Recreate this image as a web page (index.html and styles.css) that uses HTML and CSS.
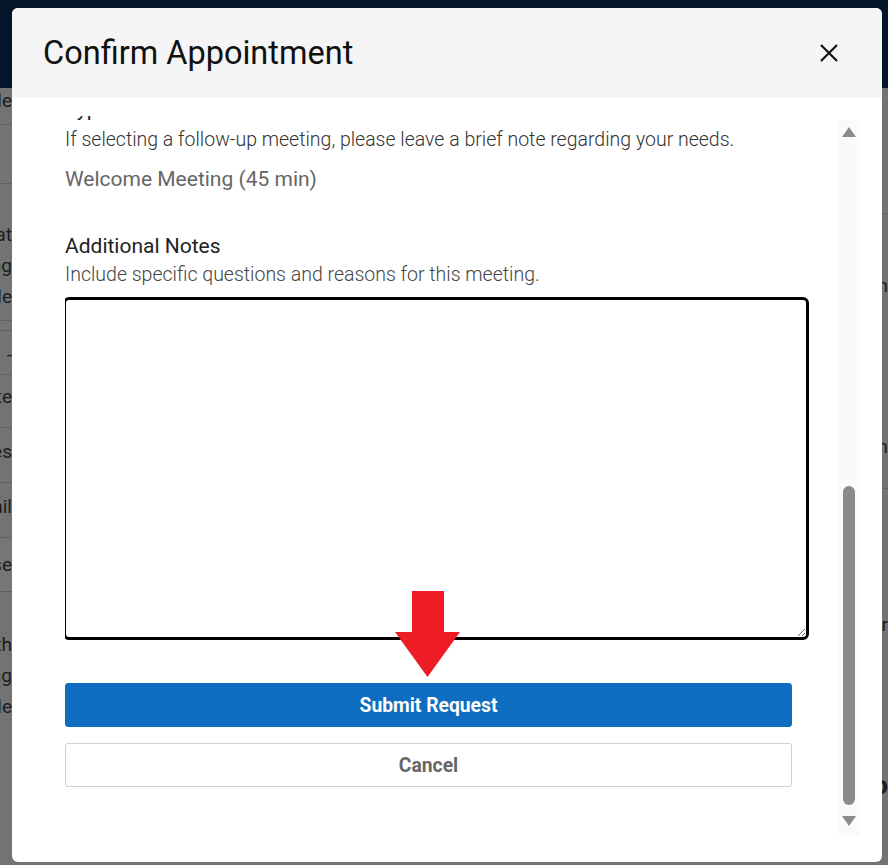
FILE: index.html
```html
<!DOCTYPE html>
<html lang="en">

<head>
    <meta charset="UTF-8">
    <meta name="viewport" content="width=device-width, initial-scale=1.0">
    <title>Confirm Appointment</title>
    <link rel="stylesheet" href="styles.css">
</head>

<body>

    <!-- page behind the dialog (dimmed) -->
    <div class="page">
        <div class="topbar"></div>
        <div class="page-main">
            <div class="side side-left">
                <div class="cell cell-1"><span>Schedule</span></div>
                <div class="cell cell-2"></div>
                <div class="cell cell-3">
                    <span>Format</span>
                    <span>Meeting</span>
                    <span>Schedule</span>
                </div>
                <div class="cell cell-4"></div>
                <div class="cell cell-5"><span>-</span></div>
                <div class="cell cell-6"><span>Date</span></div>
                <div class="cell cell-7"><span>Studies</span></div>
                <div class="cell cell-8"><span>Avail</span></div>
                <div class="cell cell-9"><span>Close</span></div>
                <div class="cell cell-10">
                    <span>With</span>
                    <span>Meeting</span>
                    <span>Schedule</span>
                </div>
            </div>
            <div class="page-center"></div>
            <div class="side side-right">
                <div class="cell r-1"></div>
                <div class="cell r-2"><span>In</span><span>Term</span></div>
                <div class="cell r-3"><span>Year</span><span class="bold">To</span></div>
            </div>
        </div>
    </div>

    <div class="modal" role="dialog">
        <div class="modal-header">
            <h2 class="modal-title">Confirm Appointment</h2>
            <button class="close-btn" aria-label="Close">
                <svg viewBox="0 0 18 18" width="18" height="18">
                    <path d="M1 1L17 17M17 1L1 17" stroke="#111" stroke-width="2.2" fill="none" />
                </svg>
            </button>
        </div>

        <div class="modal-body">
            <div class="scroll-content">
                <div class="field">
                    <label class="field-label type-label">Type</label>
                    <p class="field-help">If selecting a follow-up meeting, please leave a brief note regarding your needs.</p>
                    <p class="field-value">Welcome Meeting (45 min)</p>
                </div>

                <div class="field notes">
                    <label class="field-label" for="notes">Additional Notes</label>
                    <p class="field-help">Include specific questions and reasons for this meeting.</p>
                    <textarea id="notes" class="notes-input"></textarea>
                </div>

                <div class="actions">
                    <button class="btn btn-primary">Submit Request</button>
                    <button class="btn btn-secondary">Cancel</button>
                </div>
            </div>

            <div class="scrollbar">
                <span class="scroll-arrow up"></span>
                <div class="scroll-track">
                    <div class="scroll-thumb"></div>
                </div>
                <span class="scroll-arrow down"></span>
            </div>
        </div>

        <!-- annotation arrow -->
        <svg class="pointer-arrow" viewBox="0 0 65 87" width="65" height="87">
            <path d="M17 0H49V41H65L32.5 86L0 41H17Z" fill="#ee1c25" />
        </svg>
    </div>

</body>

</html>
```

FILE: styles.css
```css
* {
    box-sizing: border-box;
}

body {
    margin: 0;
    font-family: Roboto, "Noto Sans", sans-serif;
    background-color: #737373;
    overflow: hidden;
}

/* dimmed page in the back */
.page {
    height: 865px;
    display: flex;
    flex-direction: column;
}

.topbar {
    height: 88px;
    background-color: #021529;
}

.page-main {
    flex: 1;
    display: flex;
}

.side {
    display: flex;
    flex-direction: column;
    overflow: hidden;
    color: #1c1c1c;
    font-size: 19px;
}

.side-left {
    width: 12px;
}

.side-right {
    width: 6px;
    margin-left: auto;
}

.page-center {
    flex: 1;
}

.cell {
    display: flex;
    flex-direction: column;
    align-items: flex-end;
    white-space: nowrap;
    border-bottom: 1px solid #606060;
    line-height: 31px;
}

.cell-1 { height: 37px; padding-top: 0; line-height: 26px; }
.cell-2 { height: 59px; }
.cell-3 { height: 137px; padding-top: 35px; }
.cell-4 { height: 10px; }
.cell-5 { height: 44px; padding-top: 8px; }
.cell-6 { height: 53px; padding-top: 6px; }
.cell-7 { height: 55px; padding-top: 8px; }
.cell-8 { height: 55px; padding-top: 8px; }
.cell-9 { height: 54px; padding-top: 11px; background-color: #767676; }
.cell-10 { flex: 1; border-bottom: none; padding-top: 37px; }

.r-1 { height: 126px; }
.r-2 { height: 275px; padding-top: 56px; gap: 130px; }
.r-3 { flex: 1; border-bottom: none; padding-top: 120px; gap: 130px; }

.bold {
    font-weight: 700;
    font-size: 26px;
}

/* dialog */
.modal {
    position: fixed;
    left: 12px;
    top: 8px;
    width: 870px;
    height: 854px;
    background-color: #fff;
    border-radius: 6px;
    display: flex;
    flex-direction: column;
    overflow: hidden;
}

.modal-header {
    height: 90px;
    flex-shrink: 0;
    background-color: #f5f5f5;
    display: flex;
    align-items: center;
    justify-content: space-between;
    padding: 0 44px 0 31px;
}

.modal-title {
    margin: 0;
    font-size: 32.5px;
    font-weight: 400;
    color: #111;
}

.close-btn {
    border: none;
    background: none;
    padding: 0;
    width: 18px;
    height: 18px;
    display: flex;
    cursor: pointer;
}

.modal-body {
    flex: 1;
    display: flex;
    gap: 28px;
    padding: 18px 22px 27px 53px;
    min-height: 0;
}

.scroll-content {
    flex: 1;
    overflow: hidden;
    display: flex;
    flex-direction: column;
}

.field {
    display: flex;
    flex-direction: column;
}

.field-label {
    font-size: 21px;
    line-height: 24px;
    color: #222;
}

/* label scrolled up under the header */
.type-label {
    margin-top: -19px;
}

.field-help {
    margin: 7px 0 0;
    font-size: 19.5px;
    line-height: 24px;
    font-weight: 300;
    color: #333;
}

.field-value {
    margin: 15px 0 0;
    font-size: 21px;
    line-height: 24px;
    color: #666;
}

.notes {
    margin-top: 43px;
}

.notes .field-help {
    margin-top: 5px;
    font-size: 19.5px;
    color: #444;
}

.notes-input {
    margin: 10px 0 0 -2px;
    width: 746px;
    height: 343px;
    border: 3px solid #000;
    border-radius: 6px;
    resize: vertical;
    font-family: inherit;
    font-size: 16px;
    outline: none;
}

.actions {
    margin-top: 43px;
    display: flex;
    flex-direction: column;
    gap: 16px;
    width: 727px;
}

.btn {
    height: 44px;
    border-radius: 3px;
    font-family: inherit;
    font-size: 19.3px;
    font-weight: 700;
    cursor: pointer;
}

.btn-primary {
    background-color: #0e6dc0;
    border: 1px solid #0e6dc0;
    color: #fff;
}

.btn-secondary {
    background-color: #fff;
    border: 1px solid #cfcfcf;
    color: #666;
}

/* custom scrollbar */
.scrollbar {
    width: 23px;
    margin-top: 4px;
    background-color: #fafafa;
    display: flex;
    flex-direction: column;
    align-items: center;
    padding: 7px 0 9px;
}

.scroll-arrow {
    width: 0;
    height: 0;
    border-left: 7px solid transparent;
    border-right: 7px solid transparent;
}

.scroll-arrow.up {
    border-bottom: 10px solid #8a8a8a;
}

.scroll-arrow.down {
    border-top: 10px solid #8a8a8a;
}

.scroll-track {
    flex: 1;
    width: 12px;
    display: flex;
    flex-direction: column;
    justify-content: flex-end;
    padding-bottom: 11px;
}

.scroll-thumb {
    height: 319px;
    border-radius: 6px;
    background-color: #8a8a8a;
}

.pointer-arrow {
    position: absolute;
    left: 383px;
    top: 583px;
}
```
